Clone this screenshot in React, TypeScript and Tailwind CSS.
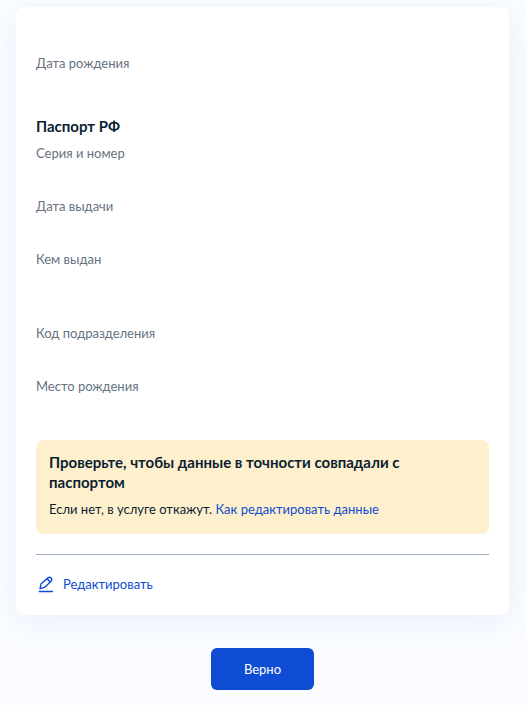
const passportFields = [
  { label: "Серия и номер", space: "h-[53px]" },
  { label: "Дата выдачи", space: "h-[53px]" },
  { label: "Кем выдан", space: "h-[74px]" },
  { label: "Код подразделения", space: "h-[53px]" },
  { label: "Место рождения", space: "h-16" },
];

function EditIcon() {
  return (
    <svg
      className="size-5"
      viewBox="0 0 20 20"
      fill="none"
      stroke="currentColor"
      strokeWidth="1.4"
      strokeLinecap="round"
      strokeLinejoin="round"
      aria-hidden="true"
    >
      <path d="M4.9 10 12 3.9a2.2 2.2 0 0 1 3.2 3L8.5 13.4l-4.4 1.3z" />
      <path d="m11.3 4.9 2.9 3" />
      <path d="M3.3 17.5h13.2" />
    </svg>
  );
}

export default function App() {
  return (
    <main className="min-h-screen bg-[#fafcff] pt-[7px] pr-[18px] pb-4 pl-4 font-['Lato',sans-serif] text-[13px] leading-5 text-[#0b1f33]">
      <section className="rounded-lg bg-white px-5 pt-[46px] pb-[21px] shadow-[0_6px_32px_rgba(110,145,220,0.12)]">
        <dl>
          <div className="h-[63px] text-[#66727f]">
            <dt>Дата рождения</dt>
            <dd />
          </div>
        </dl>

        <h2 className="text-[15px] leading-5 font-bold">Паспорт РФ</h2>
        <dl className="pt-[7px]">
          {passportFields.map((field) => (
            <div key={field.label} className={`${field.space} text-[#66727f]`}>
              <dt>{field.label}</dt>
              <dd />
            </div>
          ))}
        </dl>

        <div className="rounded-lg bg-[#fff0cd] px-[13px] pt-3 pb-[15px]">
          <h3 className="text-[15px] leading-5 font-bold">
            Проверьте, чтобы данные в точности совпадали с паспортом
          </h3>
          <p className="mt-[7px]">
            Если нет, в услуге откажут.{" "}
            <a href="#edit-help" className="text-[#0d4cd3]">
              Как редактировать данные
            </a>
          </p>
        </div>

        <hr className="mt-5 mb-[19px] border-[#9eaec5]" />

        <button type="button" className="flex items-center gap-[7px] text-[#0d4cd3]">
          <EditIcon />
          Редактировать
        </button>
      </section>

      <div className="mt-[33px] flex justify-center">
        <button type="button" className="h-[42px] rounded-md bg-[#0d4cd3] px-[33px] pb-px text-white">
          Верно
        </button>
      </div>
    </main>
  );
}
